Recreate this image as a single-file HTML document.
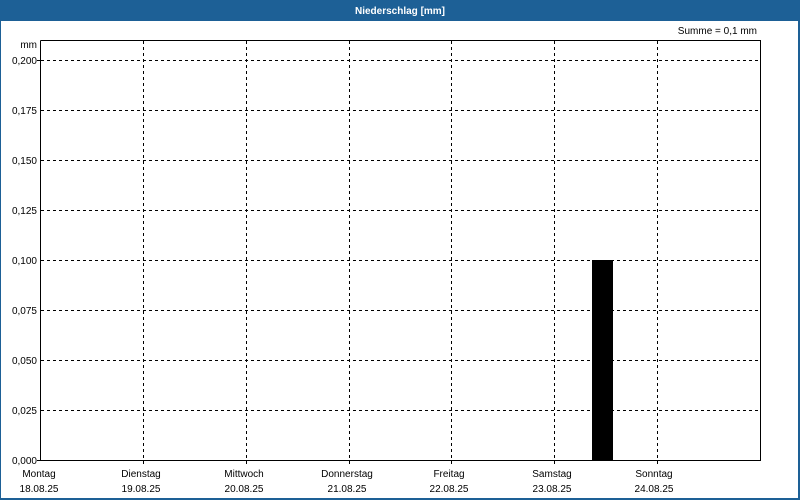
<!DOCTYPE html>
<html><head><meta charset="utf-8"><style>
body{margin:0;width:800px;height:500px;overflow:hidden;background:#fff}
svg{display:block}
text{font-family:"Liberation Sans",sans-serif;font-size:10px;fill:#000}
</style></head><body>
<svg width="800" height="500" xmlns="http://www.w3.org/2000/svg">
<rect x="0" y="0" width="800" height="500" fill="#fff"/>
<rect x="0" y="0" width="800" height="21" fill="#1d6096"/>
<rect x="0.5" y="20.5" width="799" height="479" fill="none" stroke="#1d6096" stroke-width="1"/>
<rect x="798" y="20" width="2" height="480" fill="#1d6096"/>
<rect x="0" y="498" width="800" height="2" fill="#1d6096"/>
<text x="400" y="14" text-anchor="middle" style="fill:#fff;font-weight:bold;font-size:10px">Niederschlag [mm]</text>
<text x="757" y="34" text-anchor="end">Summe = 0,1 mm</text>
<g stroke="#000" stroke-width="1" stroke-dasharray="3,3">
<line x1="41" y1="60.5" x2="760" y2="60.5"/>
<line x1="41" y1="110.5" x2="760" y2="110.5"/>
<line x1="41" y1="160.5" x2="760" y2="160.5"/>
<line x1="41" y1="210.5" x2="760" y2="210.5"/>
<line x1="41" y1="260.5" x2="760" y2="260.5"/>
<line x1="41" y1="310.5" x2="760" y2="310.5"/>
<line x1="41" y1="360.5" x2="760" y2="360.5"/>
<line x1="41" y1="410.5" x2="760" y2="410.5"/>
<line x1="143.5" y1="41" x2="143.5" y2="464"/>
<line x1="246.5" y1="41" x2="246.5" y2="464"/>
<line x1="349.5" y1="41" x2="349.5" y2="464"/>
<line x1="451.5" y1="41" x2="451.5" y2="464"/>
<line x1="554.5" y1="41" x2="554.5" y2="464"/>
<line x1="657.5" y1="41" x2="657.5" y2="464"/>
</g>
<rect x="592" y="260" width="21" height="200" fill="#000"/>
<polyline points="40.5,40.5 760.5,40.5 760.5,460.5 40.5,460.5 40.5,40.5" fill="none" stroke="#000"/>
<line x1="37" y1="460.5" x2="40" y2="460.5" stroke="#000"/>
<line x1="37" y1="60.5" x2="40" y2="60.5" stroke="#000"/>
<g text-anchor="end">
<text x="37" y="48">mm</text>
<text x="37" y="64">0,200</text>
<text x="37" y="114">0,175</text>
<text x="37" y="164">0,150</text>
<text x="37" y="214">0,125</text>
<text x="37" y="264">0,100</text>
<text x="37" y="314">0,075</text>
<text x="37" y="364">0,050</text>
<text x="37" y="414">0,025</text>
<text x="37" y="464">0,000</text>
</g>
<g text-anchor="middle">
<text x="39" y="477">Montag</text><text x="39" y="492">18.08.25</text>
<text x="141" y="477">Dienstag</text><text x="141" y="492">19.08.25</text>
<text x="244" y="477">Mittwoch</text><text x="244" y="492">20.08.25</text>
<text x="347" y="477">Donnerstag</text><text x="347" y="492">21.08.25</text>
<text x="449" y="477">Freitag</text><text x="449" y="492">22.08.25</text>
<text x="552" y="477">Samstag</text><text x="552" y="492">23.08.25</text>
<text x="654" y="477">Sonntag</text><text x="654" y="492">24.08.25</text>
</g>
</svg>
</body></html>
